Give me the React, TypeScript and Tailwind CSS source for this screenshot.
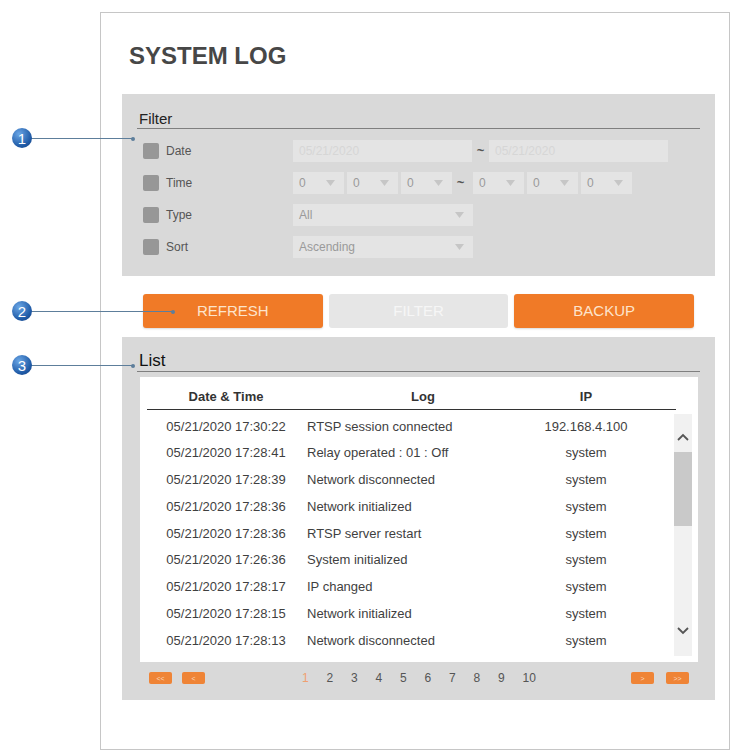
import React from "react";

const rows: [string, string, string][] = [
  ["05/21/2020 17:30:22", "RTSP session connected", "192.168.4.100"],
  ["05/21/2020 17:28:41", "Relay operated : 01 : Off", "system"],
  ["05/21/2020 17:28:39", "Network disconnected", "system"],
  ["05/21/2020 17:28:36", "Network initialized", "system"],
  ["05/21/2020 17:28:36", "RTSP server restart", "system"],
  ["05/21/2020 17:26:36", "System initialized", "system"],
  ["05/21/2020 17:28:17", "IP changed", "system"],
  ["05/21/2020 17:28:15", "Network initialized", "system"],
  ["05/21/2020 17:28:13", "Network disconnected", "system"],
];

function Arrow() {
  return (
    <svg width="9" height="6" viewBox="0 0 9 6" className="shrink-0">
      <polygon points="0,0 9,0 4.5,6" fill="#c6c6c6" />
    </svg>
  );
}

function Select({ w, value }: { w: string; value: string }) {
  return (
    <div className={`${w} h-[22px] bg-[#e4e4e4] flex items-center justify-between pl-[6px] pr-[9px] text-[12px] text-[#9a9a9a]`}>
      <span>{value}</span>
      <Arrow />
    </div>
  );
}

function Callout({ n, top, lineEnd }: { n: string; top: number; lineEnd: number }) {
  return (
    <div className="absolute left-0 w-0 h-0" style={{ top }}>
      <div
        className="absolute h-px bg-[#5d7e9b]"
        style={{ left: 30, top: 0, width: lineEnd - 30 }}
      />
      <div
        className="absolute w-[4px] h-[4px] rounded-full bg-[#5d7e9b]"
        style={{ left: lineEnd - 2, top: -1.5 }}
      />
      <div className="absolute left-[12px] top-[-10px] w-[20px] h-[20px] rounded-full bg-[radial-gradient(circle_at_35%_30%,#6aa6e6,#1f5aa6_65%,#173f7a)] flex items-center justify-center text-white text-[15px] leading-none">
        {n}
      </div>
    </div>
  );
}

function PagBtn({ label }: { label: string }) {
  return (
    <div className="w-[23px] h-[12px] rounded-[2px] bg-[#ef8436] flex items-center justify-center text-[7px] leading-none text-[#fbd9bd]">
      {label}
    </div>
  );
}

export default function App() {
  return (
    <div className="relative w-[737px] h-[754px] bg-white overflow-hidden font-['Liberation_Sans',Arial,sans-serif]">
      <div className="pt-[12px] pl-[100px]">
        <div className="w-[630px] h-[738px] border border-[#c6c6c6] pl-[21px]">
          <div className="mt-[31px] ml-[7px] text-[24px] leading-[24px] font-bold text-[#474747]">
            SYSTEM LOG
          </div>

          {/* Filter panel */}
          <div className="mt-[26px] w-[593px] h-[182px] bg-[#d9d9d9] pt-[16px]">
            <div className="mx-[15px] h-[19px] border-b border-[#7f7f7f] pl-[2px] text-[15px] leading-[18px] text-[#222]">
              Filter
            </div>
            <div className="mt-[11px] pl-[21px] flex flex-col gap-[10px]">
              <div className="flex items-center h-[22px]">
                <div className="w-[16px] h-[16px] rounded-[2px] bg-[#979797]" />
                <div className="ml-[7px] w-[127px] text-[12px] text-[#555]">Date</div>
                <div className="w-[179px] h-[22px] bg-[#e4e4e4] flex items-center pl-[6px] text-[12px] text-[#d6d6d6]">
                  05/21/2020
                </div>
                <div className="w-[17px] text-center text-[13px] font-bold text-[#555]">~</div>
                <div className="w-[179px] h-[22px] bg-[#e4e4e4] flex items-center pl-[6px] text-[12px] text-[#d6d6d6]">
                  05/21/2020
                </div>
              </div>
              <div className="flex items-center h-[22px]">
                <div className="w-[16px] h-[16px] rounded-[2px] bg-[#979797]" />
                <div className="ml-[7px] w-[127px] text-[12px] text-[#555]">Time</div>
                <div className="flex gap-[3px]">
                  <Select w="w-[51px]" value="0" />
                  <Select w="w-[51px]" value="0" />
                  <Select w="w-[51px]" value="0" />
                </div>
                <div className="w-[21px] pr-[4px] text-center text-[13px] font-bold text-[#555]">~</div>
                <div className="flex gap-[3px]">
                  <Select w="w-[51px]" value="0" />
                  <Select w="w-[51px]" value="0" />
                  <Select w="w-[51px]" value="0" />
                </div>
              </div>
              <div className="flex items-center h-[22px]">
                <div className="w-[16px] h-[16px] rounded-[2px] bg-[#979797]" />
                <div className="ml-[7px] w-[127px] text-[12px] text-[#555]">Type</div>
                <Select w="w-[180px]" value="All" />
              </div>
              <div className="flex items-center h-[22px]">
                <div className="w-[16px] h-[16px] rounded-[2px] bg-[#979797]" />
                <div className="ml-[7px] w-[127px] text-[12px] text-[#555]">Sort</div>
                <Select w="w-[180px]" value="Ascending" />
              </div>
            </div>
          </div>

          {/* Buttons */}
          <div className="mt-[18px] ml-[21px] w-[551px] h-[34px] flex gap-[6px]">
            <div className="flex-1 rounded-[3px] bg-[#f07a27] shadow-[0_1px_2px_rgba(0,0,0,0.15)] flex items-center justify-center text-[15px] text-[#fde4cc]">
              REFRESH
            </div>
            <div className="flex-1 rounded-[3px] bg-[#e6e6e6] flex items-center justify-center text-[15px] text-[#f6f6f6]">
              FILTER
            </div>
            <div className="flex-1 rounded-[3px] bg-[#f07a27] shadow-[0_1px_2px_rgba(0,0,0,0.15)] flex items-center justify-center text-[15px] text-[#fde4cc]">
              BACKUP
            </div>
          </div>

          {/* List panel */}
          <div className="mt-[9px] w-[593px] h-[363px] bg-[#d9d9d9] pt-[14px]">
            <div className="mx-[15px] h-[21px] border-b border-[#7f7f7f] pl-[2px] text-[17px] leading-[20px] text-[#111]">
              List
            </div>
            <div className="mt-[5px] ml-[18px] mr-[17px] h-[285px] bg-white">
              <div className="ml-[7px] mr-[22px] h-[33px] pt-[7px] flex items-center border-b-[1.5px] border-[#333] text-[13px] font-bold text-[#333]">
                <div className="w-[158px] text-center">Date &amp; Time</div>
                <div className="w-[236px] text-center">Log</div>
                <div className="w-[90px] text-center">IP</div>
              </div>
              <div className="flex">
                <div className="ml-[7px] mt-[3px] w-[525px] flex flex-col">
                  {rows.map((r, i) => (
                    <div key={i} className="h-[26.75px] flex items-center text-[13px] text-[#3f3f3f]">
                      <div className="w-[158px] text-center">{r[0]}</div>
                      <div className="w-[236px] pl-[2px]">{r[1]}</div>
                      <div className="w-[90px] text-center">{r[2]}</div>
                    </div>
                  ))}
                </div>
                <div className="ml-[2px] mt-[4px] w-[18px] h-[242px] bg-[#f1f1f1] flex flex-col">
                  <div className="h-[38px] pt-[8px] flex items-center justify-center">
                    <svg width="12" height="8" viewBox="0 0 12 8">
                      <polyline points="1,7 6,2 11,7" fill="none" stroke="#555" strokeWidth="1.8" />
                    </svg>
                  </div>
                  <div className="h-[74px] bg-[#c9c9c9]" />
                  <div className="flex-1 flex items-end justify-center pb-[21px]">
                    <svg width="12" height="8" viewBox="0 0 12 8">
                      <polyline points="1,1 6,6 11,1" fill="none" stroke="#555" strokeWidth="1.8" />
                    </svg>
                  </div>
                </div>
              </div>
            </div>
            <div className="h-[38px] pb-[6px] flex items-center pl-[27px] pr-[26px]">
              <PagBtn label="<<" />
              <div className="ml-[10px]">
                <PagBtn label="<" />
              </div>
              <div className="ml-[97px] flex text-[12px] text-[#555]">
                {["1", "2", "3", "4", "5", "6", "7", "8", "9", "10"].map((n) => (
                  <div key={n} className={`w-[24.5px] ${n === "1" ? "text-[#f0a070]" : ""}`}>
                    {n}
                  </div>
                ))}
              </div>
              <div className="flex-1" />
              <PagBtn label=">" />
              <div className="ml-[12px]">
                <PagBtn label=">>" />
              </div>
            </div>
          </div>
        </div>
      </div>

      <Callout n="1" top={138} lineEnd={133} />
      <Callout n="2" top={311} lineEnd={173} />
      <Callout n="3" top={365} lineEnd={133} />
    </div>
  );
}
